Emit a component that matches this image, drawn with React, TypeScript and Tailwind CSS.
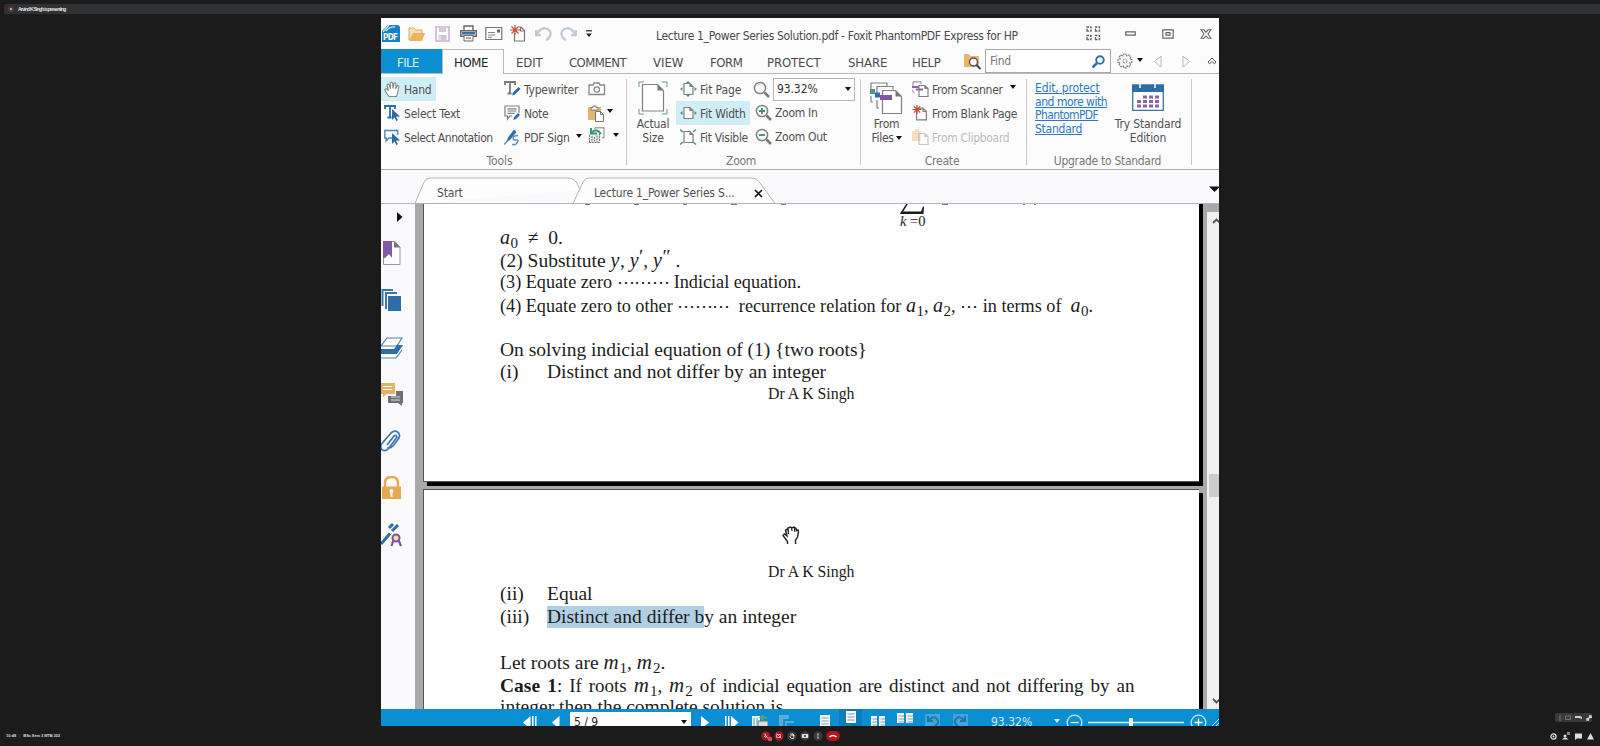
import React from "react";

const UI = "font-['DejaVu_Sans_Condensed','DejaVu_Sans',sans-serif]";
const SERIF = "font-['Liberation_Serif',serif]";

type SvgProps = { w: number; h: number; children: React.ReactNode; className?: string };

function Svg({ w, h, children, className = "" }: SvgProps) {
  return (
    <svg width={w} height={h} viewBox={`0 0 ${w} ${h}`} fill="none" className={"block shrink-0 " + className}>
      {children}
    </svg>
  );
}

function Cell({ w, children, className = "" }: { w: string; children?: React.ReactNode; className?: string }) {
  return <div className={`flex shrink-0 items-center whitespace-nowrap ${w} ${className}`}>{children}</div>;
}

function Caret({ color = "#111" }: { color?: string }) {
  return (
    <Svg w={6} h={4}>
      <path d="M0 0h6L3 4z" fill={color} />
    </Svg>
  );
}

/* ---------- Title bar ---------- */

function TitleBar() {
  return (
    <div className="flex h-[31px] shrink-0 items-center pl-px">
      <Cell w="w-[26px]">
        <Svg w={18} h={18} className="overflow-visible">
          <path d="M0 6L6 0h9q3 0 3 3v14H0z" fill="#1583c3" />
          <path d="M1 7L7 0M4 6q4-5 9-4" stroke="#bfe3f6" strokeWidth="1.3" />
          <text x="1" y="14.5" fontSize="8" fontWeight="700" fill="#fff" fontFamily="DejaVu Sans Condensed" textLength="15">PDF</text>
        </Svg>
      </Cell>
      <Cell w="w-[27px]">
        <Svg w={18} h={16}>
          <path d="M1 14V2h5l2 2h6v3" stroke="#e0a95c" fill="#f7dfb5" />
          <path d="M1 15L5 7h12l-3 8z" fill="#e9b464" />
        </Svg>
      </Cell>
      <Cell w="w-[25px]">
        <Svg w={15} h={16}>
          <path d="M1 1h13v14H1z" stroke="#c9b4d2" strokeWidth="1.6" />
          <path d="M4 1h7v5H4z" fill="#d8c8df" />
          <path d="M3.500 9h8v6h-8z" fill="#d3c2da" />
          <path d="M5 10v4" stroke="#fff" />
        </Svg>
      </Cell>
      <Cell w="w-[25px]">
        <Svg w={17} h={17}>
          <path d="M4 5V1h9v4" stroke="#666" strokeWidth="1.4" />
          <path d="M.7 5.700h15.600v5.600H.7z" fill="#f2f2f2" stroke="#666" strokeWidth="1.400" />
          <path d="M2 7h13v2.500H2z" fill="#3c6fa0" />
          <path d="M4 10.500h9V16H4z" fill="#fff" stroke="#666" />
          <path d="M6 13h5" stroke="#555" />
        </Svg>
      </Cell>
      <Cell w="w-[25px]">
        <Svg w={18} h={15}>
          <path d="M.8 1.500h16v12H.8z" stroke="#777" strokeWidth="1.2" />
          <path d="M3 6.500h7M3 9h7M3 11.300h4" stroke="#888" />
          <path d="M12 3.500h3v3h-3z" fill="#666" />
        </Svg>
      </Cell>
      <Cell w="w-[25px]">
        <Svg w={17} h={17}>
          <path d="M4.500 8v8h10V5.500L11 2H9M10.500 2v4h4" stroke="#777" strokeWidth="1.2" />
          <path d="M5 0v10M0 5h10M1.500 1.500l7 7M8.500 1.500l-7 7" stroke="#cf4b3a" strokeWidth="1.2" />
        </Svg>
      </Cell>
      <Cell w="w-[25px]">
        <Svg w={17} h={16}>
          <path d="M1 4v5h5M1.500 8.500Q6 1 11 2.500t4.500 5.500-4.500 6" stroke="#c3c7d4" strokeWidth="2.300" />
        </Svg>
      </Cell>
      <Cell w="w-[26px]">
        <Svg w={17} h={16}>
          <path d="M16 4v5h-5M15.500 8.500Q11 1 6 2.500T1.500 8 6 14" stroke="#c3cbd8" strokeWidth="2.300" />
        </Svg>
      </Cell>
      <Cell w="w-[70px]">
        <Svg w={6} h={8}>
          <path d="M0 .8h6" stroke="#222" strokeWidth="1.200" />
          <path d="M0 3.500h6L3 7z" fill="#222" />
        </Svg>
      </Cell>
      <Cell w="w-[430px]" className="pt-1 text-[12px] tracking-[-0.33px] text-[#4a4a4a]">
        Lecture 1_Power Series Solution.pdf - Foxit PhantomPDF Express for HP
      </Cell>
      <Cell w="w-[39px]">
        <Svg w={15} h={15}>
          <path d="M1 5V1h4v4zM9.500 5V1h4v4zM1 13.500v-4h4v4zM9.500 13.500v-4h4v4z" stroke="#666" strokeWidth="1.3" strokeDasharray="2.500 1" />
        </Svg>
      </Cell>
      <Cell w="w-[37px]">
        <Svg w={11} h={5}>
          <path d="M.8.8h9.400v3.400H.8z" stroke="#666" strokeWidth="1.2" />
        </Svg>
      </Cell>
      <Cell w="w-[38px]">
        <Svg w={12} h={10}>
          <path d="M.8.8h10.400v8.400H.8zM4 3.700h4v2.500H4z" stroke="#666" strokeWidth="1.2" />
        </Svg>
      </Cell>
      <Cell w="w-[12px]">
        <Svg w={12} h={10}>
          <path d="M1 .8h3l2 2.500 2-2.500h3L8 5l3 4.200H8L6 7 4 9.200H1L4 5z" stroke="#666" strokeWidth="1.1" />
        </Svg>
      </Cell>
    </div>
  );
}

/* ---------- Menu tabs ---------- */

function MenuBar() {
  return (
    <div className="flex h-[25px] shrink-0 items-stretch border-b border-[#b9b9bd] text-[13px] text-[#4a4a4a]">
      <Cell w="w-[61px]" className="bg-[#0c8fd2] pl-4 pt-1 tracking-[-0.55px] text-[#dff1fb]">FILE</Cell>
      <Cell w="w-[62px]" className="-mb-px border-x border-t border-[#b9b9bd] bg-[#fcfcfd] pl-[11px] pt-0.5 tracking-[-0.4px] text-[#222]">HOME</Cell>
      <Cell w="w-[53px]" className="pl-[12px] pt-1 tracking-[-0.1px]">EDIT</Cell>
      <Cell w="w-[84px]" className="pl-[12px] pt-1 tracking-[-0.55px]">COMMENT</Cell>
      <Cell w="w-[58px]" className="pl-[12px] pt-1">VIEW</Cell>
      <Cell w="w-[58px]" className="pl-[11px] pt-1 tracking-[-0.45px]">FORM</Cell>
      <Cell w="w-[80px]" className="pl-[10px] pt-1 tracking-[-0.1px]">PROTECT</Cell>
      <Cell w="w-[64px]" className="pl-[11px] pt-1 tracking-[-0.1px]">SHARE</Cell>
      <Cell w="w-[63px]" className="pl-[11px] pt-1 tracking-[-0.3px]">HELP</Cell>
      <Cell w="w-[21px]">
        <Svg w={18} h={17}>
          <path d="M0 14V1h5l1.500 2H15v11z" fill="#e7b66c" />
          <circle cx="9.500" cy="9" r="4" fill="#fcfcfd" stroke="#555" strokeWidth="1.5" />
          <path d="M12.500 12l4 4" stroke="#444" strokeWidth="2" />
        </Svg>
      </Cell>
      <Cell w="w-[126px]" className="h-6 justify-between border border-[#a9a9ad] bg-white pl-1 pr-[5px] text-[12px] text-[#777]">
        <span className="tracking-[-0.3px]">Find</span>
        <Svg w={13} h={13}>
          <circle cx="8" cy="5" r="3.800" stroke="#2c6db2" strokeWidth="1.900" />
          <path d="M5 8l-4.500 4.500" stroke="#2c6db2" strokeWidth="2.600" />
        </Svg>
      </Cell>
      <Cell w="w-[26px]" className="pl-[6px]">
        <Svg w={16} h={16}>
          <path d="M6.700 1h2.600l.5 2 2-1 1.900 1.900-1 2 2.200.6v2.800l-2.100.6 1 2-1.900 1.900-2-1-.6 2H6.700l-.6-2-2 1-1.900-1.900 1-2L1 9.300V6.500l2.200-.6-1-2L4.100 2l2 1z" stroke="#888" strokeWidth="1.200" strokeDasharray="2.500 .6" />
          <circle cx="8" cy="8" r="2" stroke="#888" strokeDasharray="2 1" />
        </Svg>
      </Cell>
      <Cell w="w-[16px]" className="-mt-0.5"><Caret /></Cell>
      <Cell w="w-[29px]">
        <Svg w={9} h={13}><path d="M8 1v11L1.500 6.500z" stroke="#bbb" /></Svg>
      </Cell>
      <Cell w="w-[25px]">
        <Svg w={9} h={13}><path d="M1 1v11l6.500-5.500z" stroke="#bbb" /></Svg>
      </Cell>
      <Cell w="w-[10px]">
        <Svg w={10} h={8}><path d="M1 5l4-4 4 4-1.500 1.800L5 4.500 2.500 6.800z" stroke="#555" /></Svg>
      </Cell>
    </div>
  );
}

/* ---------- Ribbon ---------- */

function Page({ big }: { big?: boolean }) {
  return big
    ? <path d="M.6.600h6.400l3.400 3.400v8.400H.6zM7 .600v3.400h3.400" stroke="#808080" strokeWidth="1.200" fill="#fff" />
    : <path d="M.5.5h6l3 3v8H.5zM6.500.5v3h3" stroke="#808080" strokeWidth="1.200" fill="#fff" />;
}

const Hand = (
  <Svg w={17} h={17}>
    <path d="M5 15.500Q2 12 .8 8.500 2.500 6.500 4.500 10L3 4Q4 2 5.200 4l1.300 4L6.300 2Q7.500.3 8.600 2l.4 5.500L10 2.300q1.400-1.200 2 .4l-.4 5.300L13.300 4.500q1.700-.3 1.500 1.500Q14 11 12.500 15.500z" stroke="#888" strokeWidth="1.100" fill="#fff" />
  </Svg>
);
const SelText = (
  <Svg w={17} h={16}>
    <path d="M1 4V1h10v3M6 1v11M3.500 12.500h4" stroke="#2e6da4" strokeWidth="1.800" />
    <path d="M8 4l8 7.500-4 .3 2 3.500-1.700.7-1.800-3.500L8 15z" fill="#2f6ca8" />
  </Svg>
);
const SelAnn = (
  <Svg w={17} h={16}>
    <path d="M8 9H5l-3 3 .3-3H.8V1.500h13V6" stroke="#4b82b4" strokeWidth="1.300" />
    <path d="M8 4l8 7.500-4 .3 2 3.500-1.700.7-1.800-3.500L8 15z" fill="#2f6ca8" />
  </Svg>
);
const Typew = (
  <Svg w={17} h={16}>
    <path d="M1 4V1h10v3M6 1v11M3.500 12.500h4" stroke="#777" strokeWidth="1.800" />
    <path d="M14.500 6l2 2-5.500 5.500-3 1 1-3z" fill="#2f6ca8" />
  </Svg>
);
const Note = (
  <Svg w={17} h={16}>
    <path d="M8 11H6l-2.500 3v-3H1V1h14v7M3.500 3.800h9M3.500 6h9M3.500 8.300h7" stroke="#808080" strokeWidth="1.200" />
    <path d="M14 8l2 2-4 4-2.800 1 1-3z" fill="#2f6ca8" />
  </Svg>
);
const Sign = (
  <Svg w={17} h={17}>
    <path d="M10 .5L12.500 3 6 11l-3.500 1.500L4 8.500z" fill="#2f6ca8" />
    <path d="M0 15.500l4-4M14 6.500q-5 0-5 2.500t3.500 2-1 4.500H8" stroke="#5d90c2" strokeWidth="1.500" />
  </Svg>
);
const Camera = (
  <Svg w={18} h={14}>
    <path d="M1 3h4l1-2h5l1 2h4.500v9.500H1z" stroke="#888" strokeWidth="1.300" />
    <circle cx="8.800" cy="7.500" r="2.700" stroke="#888" strokeWidth="1.200" />
  </Svg>
);
const Paste = (
  <Svg w={17} h={17}>
    <path d="M0 2h13v13H0z" fill="#e4b56d" />
    <path d="M3 5V2.500h2V1h3v1.500h2V5z" fill="#fff" stroke="#777" />
    <path d="M7.500 6.500h5l3 3v7h-8zM12.500 6.500v3h3" fill="#fff" stroke="#777" />
  </Svg>
);
const Rotate = (
  <Svg w={17} h={17}>
    <path d="M7 2.500V.8h9v10h-2" stroke="#808080" />
    <path d="M.5 5.500h12v10H.5z" fill="#eee" />
    <path d="M1.500 8v7.500M4 9v6M6.500 10v4.500M9 8.500v6.500M11.500 6.500v9M1 15.500h11" stroke="#777" strokeWidth="1.100" strokeDasharray="2 .8" />
    <path d="M13 7Q9 1 4 5M3 1v5.500h6" stroke="#3b9a6c" strokeWidth="2" />
  </Svg>
);

function Tool({ icon, label, active, tight = "tracking-[-0.3px]" }: { icon: React.ReactNode; label: string; active?: string; tight?: string }) {
  return (
    <div className={`flex h-6 items-center whitespace-nowrap ${active ? "bg-[#d0eef8] " + active : ""}`}>
      <div className="w-[20px] shrink-0">{icon}</div>
      <span className={"pt-px " + tight}>{label}</span>
    </div>
  );
}

function Fit({ kind }: { kind: 0 | 1 | 2 }) {
  return (
    <Svg w={17} h={16}>
      <g transform="translate(3.500 2)"><Page /></g>
      {kind < 2 && <path d="M0 8l2.500-2v4zM17 8l-2.500-2v4z" fill="#4f9481" />}
      {kind === 0 && <path d="M8 0l2 2H6zM8 16l2-2H6z" fill="#4f9481" />}
      {kind === 2 && <path d="M0 .5l3 2.500M16 .5l-3 2.500M0 15.500l3-2.500M16 15.500l-3-2.500" stroke="#4f9481" strokeWidth="1.400" />}
    </Svg>
  );
}

function Mag({ sign }: { sign?: "+" | "-" }) {
  return (
    <Svg w={17} h={17}>
      <circle cx="7" cy="7" r="5.600" stroke="#808080" strokeWidth="1.500" />
      <path d="M11.500 11.500l4.500 4.500" stroke="#777" strokeWidth="2.500" />
      {sign && <path d={sign === "+" ? "M4 7h6M7 4v6" : "M4 7h6"} stroke="#35916a" strokeWidth="1.800" />}
      {!sign && <path d="M4 5q1.500-2 3-2" stroke="#bbb" />}
    </Svg>
  );
}

function FromIcon({ kind }: { kind: "scan" | "blank" | "clip" }) {
  return (
    <Svg w={17} h={16}>
      {kind === "scan" && <><path d="M1 5V.8h8V3M0 9l2 3" stroke="#888" /><path d="M0 5h9v2H0z" fill="#8a65a8" /></>}
      {kind === "clip" && <path d="M0 2h9v10H0zM3 0h4v2H3z" fill="#f3e0c2" />}
      {kind === "blank" ? (
        <g transform="translate(4 2.500)"><Page big /></g>
      ) : (
        <g transform="translate(6.500 4)" opacity={kind === "clip" ? 0.4 : 1}><Page /></g>
      )}
      {kind === "scan" && <path d="M4 7.500h7v2H4z" fill="#8a65a8" />}
      {kind === "blank" && <path d="M5 0v9M.5 4.500h9M1.800 1.300l6.400 6.400M8.200 1.300L1.800 7.700" stroke="#d8452f" strokeWidth="1.200" />}
    </Svg>
  );
}

function Ribbon() {
  return (
    <div className="flex h-[96px] shrink-0 border-b border-[#adadb1] text-[12px] text-[#505050]">
      {/* Tools */}
      <div className="flex w-[245px] shrink-0 flex-col pt-[3px]">
        <div className="flex">
          <div className="w-[120px] shrink-0 pl-[3px]">
            <Tool icon={Hand} label="Hand" active="-ml-[3px] w-[55px] pl-[3px]" />
            <Tool icon={SelText} label="Select Text" tight="tracking-[-0.2px]" />
            <Tool icon={SelAnn} label="Select Annotation" tight="tracking-[-0.42px]" />
          </div>
          <div className="w-[87px] shrink-0 pl-[3px]">
            <Tool icon={Typew} label="Typewriter" tight="tracking-[-0.2px]" />
            <Tool icon={Note} label="Note" />
            <div className="flex items-center">
              <Tool icon={Sign} label="PDF Sign" />
              <div className="-mt-0.5 ml-[6px]"><Caret /></div>
            </div>
          </div>
          <div>
            <div className="flex h-6 items-center">{Camera}</div>
            <div className="flex h-6 items-center gap-[2px]">{Paste}<div className="-mt-1"><Caret /></div></div>
            <div className="flex h-6 items-center gap-[8px] pb-1">{Rotate}<Caret /></div>
          </div>
        </div>
        <div className="pr-[8px] pt-[4px] text-center leading-4 tracking-[-0.1px] text-[#777]">Tools</div>
      </div>
      {/* Zoom */}
      <div className="flex w-[234px] shrink-0 flex-col">
        <div className="flex h-[77px] shrink-0">
          <div className="mt-[5px] h-[86px] w-px shrink-0 bg-[#c9c9cd]" />
          <div className="flex w-[49px] shrink-0 flex-col items-center pl-[3px] pt-[7px]">
            <Svg w={30} h={34}>
              <path d="M1 6V1h5M24 1h5v5M1 28v5h5M24 33h5v-5" stroke="#5d9a8c" />
              <path d="M4.500 3.500h15l6 6V30h-21z" stroke="#808080" strokeWidth="1.200" fill="#fff" />
              <path d="M19.500 3.500v6h6z" fill="#777" />
            </Svg>
            <div className="mt-[3px] text-center leading-[13.500px] tracking-[-0.2px]">Actual<br />Size</div>
          </div>
          <div className="w-[77px] shrink-0 pl-[4px] pt-[3px]">
            <Tool icon={<Fit kind={0} />} label="Fit Page" tight="tracking-[-0.1px]" />
            <Tool icon={<Fit kind={1} />} label="Fit Width" active="-ml-1 w-[74px] pl-1" tight="tracking-[-0.2px]" />
            <Tool icon={<Fit kind={2} />} label="Fit Visible" tight="tracking-[-0.3px]" />
          </div>
          <div className="shrink-0 pt-[3px]">
            <div className="flex h-6 items-center">
              <div className="w-[20px]"><Mag /></div>
              <div className="flex h-[23px] w-[82px] items-center justify-between border border-[#b5b5b9] bg-white px-[3px] text-[#333]">
                <span className="tracking-[-0.1px]">93.32%</span><Caret />
              </div>
            </div>
            <div className="-mt-px pl-[2px]"><Tool icon={<Mag sign="+" />} label="Zoom In" /></div>
            <div className="pl-[2px]"><Tool icon={<Mag sign="-" />} label="Zoom Out" /></div>
          </div>
        </div>
        <div className="pt-[2px] pr-[4px] text-center leading-4 tracking-[-0.3px] text-[#777]">Zoom</div>
      </div>
      {/* Create */}
      <div className="flex w-[166px] shrink-0 flex-col">
        <div className="flex h-[77px] shrink-0">
          <div className="mt-[5px] h-[86px] w-px shrink-0 bg-[#c9c9cd]" />
          <div className="flex w-[51px] shrink-0 flex-col items-center pt-[8px]">
            <Svg w={33} h={33}>
              <path d="M1 7V1h16v3M3 20H1v-6M7 14V4.500h16v3M9 26H7v-8" stroke="#808080" strokeWidth="1.200" />
              <path d="M12.500 8.500h13l6 6v17h-19z" fill="#fff" stroke="#808080" strokeWidth="1.200" />
              <path d="M25.500 8.500v6h6z" fill="#777" />
              <path d="M0 7h5v5H0z" fill="#4a9b7c" /><path d="M5 10.500h5v5H5z" fill="#2f6ca8" /><path d="M10 13h12v5H10z" fill="#8057a4" />
            </Svg>
            <div className="mt-[3px] text-center leading-[13.500px] tracking-[-0.3px]">From<br /><span className="flex items-center gap-[2px]">Files<Caret /></span></div>
          </div>
          <div className="pt-[3px]">
            <div className="flex items-center gap-[7px]"><Tool icon={<FromIcon kind="scan" />} label="From Scanner" /><div className="-mt-1"><Caret /></div></div>
            <Tool icon={<FromIcon kind="blank" />} label="From Blank Page" />
            <div className="text-[#bcbcbc]"><Tool icon={<FromIcon kind="clip" />} label="From Clipboard" /></div>
          </div>
        </div>
        <div className="pt-[2px] pr-[2px] text-center leading-4 tracking-[-0.2px] text-[#777]">Create</div>
      </div>
      {/* Upgrade */}
      <div className="flex w-[165px] shrink-0 flex-col">
        <div className="flex h-[77px] shrink-0">
          <div className="mt-[5px] h-[86px] w-px shrink-0 bg-[#c9c9cd]" />
          <div className="w-[79px] shrink-0 whitespace-nowrap pl-[8px] pt-[8px] leading-[13.600px] text-[#2d78c4] underline">
            <span className="tracking-[-0.15px]">Edit, protect</span><br /><span className="tracking-[-0.45px]">and more with</span><br /><span className="tracking-[-0.6px]">PhantomPDF</span><br /><span className="tracking-[-0.25px]">Standard</span>
          </div>
          <div className="flex w-[84px] shrink-0 flex-col items-center whitespace-nowrap pt-[9px]">
            <Svg w={32} h={28}>
              <path d="M.7 2h30.600v25.300H.7z" fill="#fff" stroke="#3b73ad" strokeWidth="1.300" />
              <path d="M0 2h32v7H0z" fill="#2f6ca8" />
              <path d="M8 0v5M23 0v5" stroke="#fff" strokeWidth="1.500" />
              <path d="M11 12.500h4v3h-4zM17 12.500h4v3h-4zM23 12.500h4v3h-4zM5 17h4v3H5zM11 17h4v3h-4zM17 17h4v3h-4zM23 17h4v3h-4zM5 21.500h4v3H5zM11 21.500h4v3h-4zM17 21.500h4v3h-4zM23 21.500h4v3h-4z" fill="#8c62a8" />
            </Svg>
            <div className="mt-[7px] text-center leading-[13.500px] tracking-[-0.15px]">Try Standard<br />Edition</div>
          </div>
        </div>
        <div className="pt-[2px] pr-[2px] text-center leading-4 tracking-[-0.3px] text-[#777]">Upgrade to Standard</div>
      </div>
      <div className="mt-[5px] h-[86px] w-px shrink-0 bg-[#c9c9cd]" />
    </div>
  );
}

/* ---------- Document tabs ---------- */

function DocTabs() {
  return (
    <div className="relative flex h-[34px] shrink-0 items-center bg-[#fafafc] text-[12px] text-[#505050]">
      <Svg w={838} h={34} className="absolute inset-0">
        <path d="M34 33.500L43 12q2-4 6-4H188q5 0 8 5l3 7M192 33.500L202 12q2-4 6-4H371q5 0 8 5l15 20.500z" fill="#fdfdfe" stroke="#b4b4b8" />
        <path d="M0 33.500H838" stroke="#b9b2b7" />
      </Svg>
      <Cell w="w-[157px]" className="relative ml-[56px] pt-[11px] tracking-[-0.15px]">Start</Cell>
      <Cell w="w-[160px]" className="relative pt-[11px] tracking-[-0.2px]">Lecture 1_Power Series S...</Cell>
      <Svg w={9} h={9} className="relative mt-3"><path d="M1 1l7 7M8 1L1 8" stroke="#111" strokeWidth="1.700" /></Svg>
      <Svg w={10} h={6} className="relative ml-auto mt-[3px]"><path d="M0 .5h10v1L5.500 6z" fill="#111" /></Svg>
    </div>
  );
}

/* ---------- Side panel ---------- */

function SidePanel() {
  return (
    <div className="flex w-[34px] shrink-0 flex-col bg-[#fafafc] pt-[8px]">
      <Svg w={6} h={10} className="ml-4"><path d="M0 0l5.500 5L0 10z" fill="#111" /></Svg>
      <Svg w={20} h={24} className="mt-[19px]">
        <path d="M2.500.5H14l5 6v17H2.500z" fill="#fff" stroke="#999" />
        <path d="M13 0v6.500h6.500z" fill="#777" />
        <path d="M2 0h9v17l-3-4-4 4H2z" fill="#8358a4" />
      </Svg>
      <Svg w={20} h={23} className="mt-[24px]">
        <path d="M1.500 17V1H12M5 20V4h11" stroke="#3a75ae" strokeWidth="2" />
        <path d="M7 7h13v15H7z" fill="#2f6ca8" />
      </Svg>
      <Svg w={22} h={23} className="mt-[25px]">
        <path d="M6 1h15l-5 8H0zM0 21h15l6-8" stroke="#4d83b5" strokeWidth="1.200" fill="#fff" />
        <path d="M0 12h13l3-4h6l-6 9H0z" fill="#2f6ca8" />
      </Svg>
      <Svg w={22} h={23} className="mt-[23px]">
        <path d="M0 0h14v11H6l-4 3v-3H0z" fill="#e6b365" /><path d="M2 3.500h9M2 6.500h9" stroke="#fff" />
        <path d="M15 8h7v12h-1v3l-4-3H7v-7h8z" fill="#707070" /><path d="M10 14h9M10 17h9" stroke="#ddd" />
      </Svg>
      <Svg w={20} h={23} className="mt-[24px]">
        <path d="M6 15l7-9q2.500-1.500 3 1l-8 11q-3.500 4-6.500 2t-1-6L10 3q3.500-3 6.500-1t1.500 6l-6 8q-3 3-5.500 1.500" stroke="#4079b0" strokeWidth="1.700" />
      </Svg>
      <Svg w={20} h={24} className="mt-[23px]">
        <path d="M4 11V7q0-6 6.500-6T17 7v4" stroke="#e5a94f" strokeWidth="2.400" />
        <path d="M1 10.500h19V23H1z" fill="#e5a94f" />
        <path d="M10.500 13a2 2 0 011 3.700v4h-2v-4a2 2 0 011-3.700" fill="#fff" />
      </Svg>
      <Svg w={22} h={24} className="mt-[23px]">
        <path d="M17 2l-6 6M9 10.500L0 21M12 1L8 5" stroke="#2f6ca8" strokeWidth="3" />
        <path d="M12.500 17l-2 6M17.500 17l2.500 6" stroke="#7d519f" strokeWidth="2.200" />
        <circle cx="15" cy="15" r="3.500" fill="#f1d8a8" stroke="#7d519f" strokeWidth="2" />
      </Svg>
    </div>
  );
}

/* ---------- Document ---------- */

function V({ s, n, wide }: { s: string; n?: string; wide?: boolean }) {
  return (
    <>
      <i className={wide ? "text-[21px] tracking-[1px]" : "text-[20px] tracking-[0.5px]"}>{s}</i>
      {n && <span className="relative top-[4px] text-[15px]">{n}</span>}
    </>
  );
}

function Line({ h = "h-[22.500px]", className = "", children }: { h?: string; className?: string; children?: React.ReactNode }) {
  return <div className={`${h} shrink-0 whitespace-pre leading-[22px] ${className}`}>{children}</div>;
}

function Dots() {
  return <span className="tracking-[-0.5px]">⋯⋯⋯</span>;
}

function Document() {
  return (
    <div className="flex min-w-0 flex-1 flex-col overflow-hidden bg-[#a9a9a9] text-[19.500px] text-[#1c1c1c]">
      <div className="relative ml-[8px] h-[282px] w-[780px] shrink-0">
        <div className="absolute bottom-0 left-[4px] right-0 top-0 bg-black" />
        <div className={`relative flex h-[278px] w-[776px] flex-col border-b border-l border-[#555] bg-white pl-[76px] ${SERIF}`}>
          <div className="-ml-[20px] flex h-[22px] shrink-0">
            <div className="flex w-[420px] shrink-0 gap-[44px] pl-[105px]">
              {[5, 5, 4, 6, 5].map((w, i) => (
                <span key={i} className="h-px bg-[#777]" style={{ width: w }} />
              ))}
            </div>
            <div className="w-[30px] shrink-0">
              <Svg w={26} h={11}><path d="M7 0L2 8" stroke="#1c1c1c" strokeWidth="1.500" /><path d="M1 7.500h20L23 2.500h1L23.500 10H0z" fill="#1c1c1c" /></Svg>
              <div className="whitespace-nowrap text-[14.500px] leading-[13px]"><i>k</i> =0</div>
            </div>
            <div className="flex gap-[9px] pl-[12px]"><span className="h-px w-[6px] bg-[#777]" /><span className="ml-[66px] h-px w-[2px] bg-[#777]" /><span className="h-px w-[2px] bg-[#777]" /></div>
          </div>
          <Line><V s="a" n="0" />{"  ≠ "}<span> 0.</span></Line>
          <Line>{"(2) Substitute "}<V s="y" />{", "}<V s="y" /><span className="relative -top-[4px]">′</span>{", "}<V s="y" /><span className="relative -top-[4px]">″</span>{" ."}</Line>
          <Line className="text-[18.200px]">{"(3) Equate zero "}<Dots />{" Indicial equation."}</Line>
          <Line h="h-[45px]" className="text-[18.200px]">{"(4) Equate zero to other "}<Dots />{"  recurrence relation for "}<V s="a" n="1" />{", "}<V s="a" n="2" />{", ⋯ in terms of  "}<V s="a" n="0" />.</Line>
          <Line>{"On solving indicial equation of (1) {two roots}"}</Line>
          <Line className="flex"><span className="w-[47px]">(i)</span>Distinct and not differ by an integer</Line>
          <Line className="-mt-px pl-[268px] text-[15.800px]">Dr A K Singh</Line>
        </div>
      </div>
      <div className="relative ml-[8px] mt-[3px] h-[240px] w-[780px] shrink-0">
        <div className="absolute bottom-0 left-[4px] right-0 top-[4px] bg-black" />
        <div className={`relative flex h-[240px] w-[776px] flex-col border-l border-t border-[#555] bg-white pl-[76px] ${SERIF}`}>
          <div className="h-[71px] shrink-0 pl-[282px] pt-[36px]">
            <Svg w={18} h={19}>
              <path d="M5.500 18v-2.500L1 9.500l1.500-1.500L5 10 3.500 4l2-1M6.500 8L6 2l2.500-1 1.500 1 2-1 2 1.500.5 2 1.500-.5.500 2-1 5-2 3.500V18" stroke="#222" strokeWidth="1.400" />
              <path d="M9.500 2l.5 3M12.500 2l.3 4" stroke="#222" strokeWidth="1.200" />
            </Svg>
          </div>
          <Line className="pl-[268px] text-[15.800px]">Dr A K Singh</Line>
          <Line className="-mt-px flex"><span className="w-[47px]">(ii)</span>Equal</Line>
          <Line h="h-[45.500px]" className="mt-[0.500px] flex"><span className="w-[47px]">(iii)</span><span className="h-[22px] w-[157px] bg-[#b1cfe2]">Distinct and differ by an integer</span></Line>
          <Line>{"Let roots are "}<V wide s="m" n="1" />{", "}<V wide s="m" n="2" />.</Line>
          <Line className="text-[19px] [word-spacing:2.200px]"><b className="text-[19.500px]">Case 1</b>{": If roots "}<V wide s="m" n="1" />{", "}<V wide s="m" n="2" />{" of indicial equation are distinct and not differing by an"}</Line>
          <Line>integer then the complete solution is</Line>
        </div>
      </div>
    </div>
  );
}

function Scrollbar() {
  return (
    <div className="flex w-[16px] shrink-0 bg-[#a9a9a9] pl-[4px] pt-[8px]">
      <div className="flex w-[12px] flex-col items-end bg-[#f0f0f2] pt-[6px]">
        <Svg w={7} h={6}><path d="M1 5l3.500-3.500L8 5" stroke="#555" strokeWidth="1.800" /></Svg>
        <div className="mt-[250px] h-[23px] w-[10px] bg-[#cdcdd0]" />
        <Svg w={7} h={6} className="mb-[5px] mt-auto"><path d="M1 1l3.500 3.500L8 1" stroke="#555" strokeWidth="1.800" /></Svg>
      </div>
    </div>
  );
}

/* ---------- Status bar ---------- */

function Sheet() {
  return (
    <Svg w={10} h={12}>
      <path d="M0 0h10v12H0z" fill="#f4f8fb" />
      <path d="M1.500 3h7M1.500 6h7M1.500 9h7" stroke="#8b9aa5" />
    </Svg>
  );
}

function StatusBar() {
  return (
    <div className="flex h-[17px] shrink-0 items-start overflow-hidden bg-[#0c8fd2] text-[12px]">
      <Cell w="w-[29px]" className="ml-[142px] pt-[7px]">
        <Svg w={14} h={13}><path d="M7.500 0v13L0 6.500zM9 0h1.500v13H9zM12 0h1.500v13H12z" fill="#fff" /></Svg>
      </Cell>
      <Cell w="w-[18px]" className="pt-[7px]"><Svg w={8} h={13}><path d="M7.500 0v13L0 6.500z" fill="#fff" /></Svg></Cell>
      <Cell w="w-[121px]" className="mt-[3px] h-[20px] justify-between bg-white pl-1 pr-1 text-[#222]">5 / 9<Caret /></Cell>
      <Cell w="w-[34px]" className="pl-[10px] pt-[7px]"><Svg w={8} h={13}><path d="M0 0v13l8-6.500z" fill="#fff" /></Svg></Cell>
      <Cell w="w-[27px]" className="pt-[7px]">
        <Svg w={14} h={13}><path d="M6 0v13l7.500-6.500zM0 0h1.500v13H0zM3 0h1.500v13H3z" fill="#fff" /></Svg>
      </Cell>
      <Cell w="w-[27px]" className="pt-[6px]">
        <Svg w={16} h={13}>
          <path d="M0 1h8v11H0z" fill="#e9eef0" /><path d="M6 6h10v7H6z" fill="#ddd" stroke="#777" />
          <path d="M2 3v8M5 3v8" stroke="#6aa3c3" /><path d="M9 2.500h6M11.500 0L8.500 2.500l3 2.500" stroke="#52a773" strokeWidth="1.800" />
        </Svg>
      </Cell>
      <Cell w="w-[41px]" className="pt-[6px]">
        <Svg w={16} h={13}><path d="M0 0h10v4H4v8H0zM6 6h9v2H8v5H6z" fill="#5aacd6" /></Svg>
      </Cell>
      <Cell w="w-[19px]" className="pt-[6px]"><Sheet /></Cell>
      <Cell w="w-[32px]" className="h-[17px]">
        <div className="flex h-[17px] w-[23px] items-center justify-center bg-[#0b7cbc] pb-px"><Sheet /></div>
      </Cell>
      <Cell w="w-[26px]" className="gap-[2px] pt-[7px]"><div className="w-[6px] overflow-hidden"><Sheet /></div><div className="w-[6px] overflow-hidden"><Sheet /></div></Cell>
      <Cell w="w-[28px]" className="gap-[2px] pt-[4px]"><div className="h-[10px] w-[7px] overflow-hidden"><Sheet /></div><div className="h-[10px] w-[7px] overflow-hidden"><Sheet /></div></Cell>
      <Cell w="w-[28px]" className="pt-[5px]">
        <Svg w={15} h={13}><path d="M0 0h15v13H0z" fill="#43a4d6" /><path d="M3 2v5h5M4 6q5-5 8-1t-2 7" stroke="#1878ad" strokeWidth="2" /></Svg>
      </Cell>
      <Cell w="w-[38px]" className="pt-[5px]">
        <Svg w={15} h={13}><path d="M0 0h15v13H0z" fill="#43a4d6" /><path d="M12 2v5H7M11 6Q6 1 3 5t2 7" stroke="#1878ad" strokeWidth="2" /></Svg>
      </Cell>
      <Cell w="w-[63px]" className="pt-[4px] text-[#cfe9f7]">93.32%</Cell>
      <Cell w="w-[12px]" className="pt-[10px]"><Caret color="#d5edf9" /></Cell>
      <Cell w="w-[22px]" className="pt-[5px]">
        <Svg w={17} h={17}><circle cx="8.500" cy="8.500" r="7.300" stroke="#c5e6f6" strokeWidth="1.300" /><path d="M4.500 8.500h8" stroke="#fff" strokeWidth="1.300" /></Svg>
      </Cell>
      <Cell w="w-[102px]" className="pt-[9px]">
        <Svg w={96} h={9}><path d="M0 4.500h96" stroke="#d5edf9" strokeWidth="1.300" /><path d="M41 0h4v9h-4z" fill="#f2f2f2" /></Svg>
      </Cell>
      <Cell w="w-[22px]" className="pt-[5px]">
        <Svg w={17} h={17}><circle cx="8.500" cy="8.500" r="7.300" stroke="#c5e6f6" strokeWidth="1.300" /><path d="M4.500 8.500h8M8.500 4.500v8" stroke="#fff" strokeWidth="1.300" /></Svg>
      </Cell>
      <Svg w={8} h={8} className="mt-[9px]"><path d="M0 8L8 0M4 8l4-4" stroke="#bfe1f2" /></Svg>
    </div>
  );
}

/* ---------- Call controls ---------- */

function CallBar() {
  return (
    <div className="flex h-[20px] shrink-0 items-center font-['Liberation_Sans',sans-serif]">
      <div className="flex w-[761px] shrink-0 gap-[3px] whitespace-nowrap pl-[6px] text-[4px] font-bold leading-none text-[#ddd]">
        <span>10:48</span><span className="text-[#555]">|</span><span className="tracking-[-0.1px]">BSc Sem 3 MTB 303</span>
      </div>
      <div className="flex w-[760px] shrink-0 items-center gap-[3px]">
        <Svg w={12} h={11}>
          <circle cx="4.700" cy="5" r="4.600" fill="#a51420" /><path d="M4.700 2.500v3M3 5q1.700 3 3.400 0M3 2.500l4 5" stroke="#eac5c8" strokeWidth=".8" />
          <circle cx="9" cy="8" r="2.300" fill="#d94b55" />
        </Svg>
        <Svg w={10} h={10} className="-ml-[2px]"><circle cx="5" cy="5" r="4.700" fill="#a51420" /><path d="M2.500 3.500h4v3h-4zM2.500 2.500l5 5" stroke="#eac5c8" strokeWidth=".8" /></Svg>
        <Svg w={10} h={10}><circle cx="5" cy="5" r="4.700" fill="#37393b" /><path d="M2.700 5l1.500 2.500h2.300L7.200 4M4 5V2.500M5.300 5V2M6.500 5V3" stroke="#ddd" strokeWidth=".9" /></Svg>
        <Svg w={10} h={10}><circle cx="5" cy="5" r="4.700" fill="#37393b" /><path d="M1.800 3h6.400v4H1.800z" fill="#ddd" /><circle cx="5" cy="5" r="1" fill="#333" /></Svg>
        <Svg w={10} h={10}><circle cx="5" cy="5" r="4.700" fill="#37393b" /><path d="M5 2.500v1.200M5 4.400v1.200M5 6.300v1.200" stroke="#eee" strokeWidth="1.400" /></Svg>
        <Svg w={14} h={10}><rect width="14" height="10" rx="5" fill="#b3141c" /><path d="M3.500 6Q7 3 10.500 6" stroke="#fff" strokeWidth="1.600" /></Svg>
      </div>
      <div className="flex gap-[5px] pl-[29px]">
        <Svg w={7} h={7}><circle cx="3.500" cy="3.500" r="2.600" stroke="#ddd" strokeWidth="1.200" /><circle cx="3.500" cy="3.500" r="1" fill="#ddd" /></Svg>
        <Svg w={8} h={8} className="-mt-px"><circle cx="3" cy="4" r="1.500" fill="#ddd" /><path d="M0 7.500q3-4 6.500 0z" fill="#ddd" /><path d="M5 0h3v3H5z" fill="#888" /></Svg>
        <Svg w={7} h={7}><path d="M0 .5h7v5H2L0 7z" fill="#ddd" /></Svg>
        <Svg w={7} h={7}><path d="M3.500 0L7 6.500H0z" fill="#ddd" /></Svg>
      </div>
    </div>
  );
}

export default function App() {
  return (
    <div className="relative flex h-[746px] w-[1600px] flex-col overflow-hidden bg-[#1b1b1c]">
      <div className="flex h-[18px] shrink-0 flex-col pl-[4px] pt-[4px]">
        <div className="flex h-[10px] items-center gap-[4px] rounded-l-[2px] bg-[#2f3132] pl-[4px] font-['Liberation_Sans',sans-serif] text-[5px] font-bold leading-none text-[#e0e0e0]">
          <Svg w={6} h={6}><circle cx="3" cy="3" r="3" fill="#50383a" /><circle cx="3" cy="3" r="1" fill="#ccc" /></Svg>
          <span className="tracking-[-0.75px]">Arvind K Singh is presenting</span>
        </div>
      </div>
      <div className={`ml-[381px] flex h-[708px] w-[838px] shrink-0 flex-col overflow-hidden bg-[#fcfcfd] ${UI}`}>
        <TitleBar />
        <MenuBar />
        <Ribbon />
        <DocTabs />
        <div className="flex h-[505px] shrink-0">
          <SidePanel />
          <Document />
          <Scrollbar />
        </div>
        <StatusBar />
      </div>
      <CallBar />
      <div className="absolute right-[8px] top-[713px] flex h-[9px] w-[37px] items-center gap-[4px] rounded-[2px] bg-[#38393b] pl-[4px]">
        <Svg w={2} h={6}><path d="M1 0v6" stroke="#777" /></Svg>
        <Svg w={6} h={5}><path d="M.5 1h5v3.500h-5z" stroke="#777" /></Svg>
        <Svg w={7} h={5}><path d="M0 1h5l2 1v2L4 3H0z" fill="#ccc" /></Svg>
        <Svg w={6} h={6}><path d="M1 5l4-4M3 1h2v2M1 3v2h2" stroke="#ddd" strokeWidth="1.300" /></Svg>
      </div>
    </div>
  );
}
